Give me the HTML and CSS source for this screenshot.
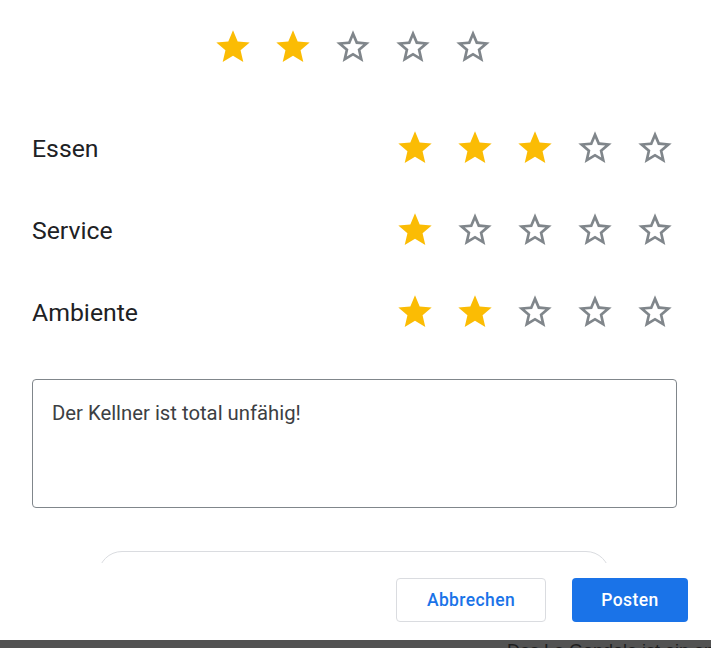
FILE: index.html
```html
<!DOCTYPE html>
<html lang="de">
<head>
<meta charset="utf-8">
<title>Bewertung</title>
<link rel="stylesheet" href="styles.css">
</head>
<body>
<svg width="0" height="0" class="defs" aria-hidden="true">
  <defs>
    <path id="full" d="M12 17.27L18.18 21l-1.64-7.03L22 9.24l-7.19-.61L12 2 9.19 8.63 2 9.24l5.46 4.73L5.820 21z"/>
    <path id="empty" d="M22 9.24l-7.19-.62L12 2 9.19 8.63 2 9.24l5.46 4.73L5.82 21 12 17.27 18.18 21l-1.63-7.03L22 9.24zM12 15.4l-3.76 2.27 1-4.28-3.32-2.88 4.38-.38L12 6.1l1.71 4.04 4.38.38-3.32 2.88 1 4.28L12 15.4z"/>
  </defs>
</svg>
<div class="dialog">
  <div class="scroll">
    <div class="overall">
      <svg class="star on" viewBox="0 0 24 24"><use href="#full"/></svg>
      <svg class="star on" viewBox="0 0 24 24"><use href="#full"/></svg>
      <svg class="star off" viewBox="0 0 24 24"><use href="#empty"/></svg>
      <svg class="star off" viewBox="0 0 24 24"><use href="#empty"/></svg>
      <svg class="star off" viewBox="0 0 24 24"><use href="#empty"/></svg>
    </div>
    <div class="criteria">
      <div class="row">
        <span class="label">Essen</span>
        <div class="stars">
          <svg class="star on" viewBox="0 0 24 24"><use href="#full"/></svg>
          <svg class="star on" viewBox="0 0 24 24"><use href="#full"/></svg>
          <svg class="star on" viewBox="0 0 24 24"><use href="#full"/></svg>
          <svg class="star off" viewBox="0 0 24 24"><use href="#empty"/></svg>
          <svg class="star off" viewBox="0 0 24 24"><use href="#empty"/></svg>
        </div>
      </div>
      <div class="row">
        <span class="label">Service</span>
        <div class="stars">
          <svg class="star on" viewBox="0 0 24 24"><use href="#full"/></svg>
          <svg class="star off" viewBox="0 0 24 24"><use href="#empty"/></svg>
          <svg class="star off" viewBox="0 0 24 24"><use href="#empty"/></svg>
          <svg class="star off" viewBox="0 0 24 24"><use href="#empty"/></svg>
          <svg class="star off" viewBox="0 0 24 24"><use href="#empty"/></svg>
        </div>
      </div>
      <div class="row">
        <span class="label">Ambiente</span>
        <div class="stars">
          <svg class="star on" viewBox="0 0 24 24"><use href="#full"/></svg>
          <svg class="star on" viewBox="0 0 24 24"><use href="#full"/></svg>
          <svg class="star off" viewBox="0 0 24 24"><use href="#empty"/></svg>
          <svg class="star off" viewBox="0 0 24 24"><use href="#empty"/></svg>
          <svg class="star off" viewBox="0 0 24 24"><use href="#empty"/></svg>
        </div>
      </div>
    </div>
    <textarea class="review">Der Kellner ist total unfähig!</textarea>
    <div class="card"></div>
  </div>
  <div class="footer">
    <button class="btn secondary">Abbrechen</button>
    <button class="btn primary">Posten</button>
  </div>
</div>
<div class="backdrop">
  <span class="behind">Das La Gondola ist ein angenehmes Restaurant</span>
</div>
</body>
</html>
```

FILE: styles.css
```css
html, body {
  margin: 0;
  padding: 0;
  background: #ffffff;
}
body {
  font-family: Roboto, "Noto Sans", Arial, sans-serif;
  width: 711px;
  height: 648px;
  overflow: hidden;
}
.defs {
  position: absolute;
  width: 0;
  height: 0;
}
.dialog {
  width: 711px;
  height: 640px;
  background: #ffffff;
  display: flex;
  flex-direction: column;
}
.scroll {
  height: 563px;
  overflow: hidden;
  padding: 27px 34px 0 32px;
  box-sizing: border-box;
}
.star {
  width: 40px;
  height: 40px;
  display: block;
  flex: none;
}
.star.on { fill: #fbbc04; }
.star.off { fill: #80868b; }
.overall {
  display: flex;
  justify-content: center;
  gap: 20px;
  padding-right: 3px;
}
.criteria {
  margin-top: 61px;
  display: flex;
  flex-direction: column;
  gap: 42px;
}
.row {
  display: flex;
  align-items: center;
  justify-content: space-between;
  padding-right: 2px;
}
.label {
  font-size: 24.8px;
  line-height: 32px;
  padding-top: 2px;
  color: #202124;
}
.stars {
  display: flex;
  gap: 20px;
}
.review {
  display: block;
  margin-top: 47px;
  width: 645px;
  height: 129px;
  box-sizing: border-box;
  border: 1px solid #80868b;
  border-radius: 4px;
  padding: 19px 19px;
  font-family: Roboto, "Noto Sans", Arial, sans-serif;
  font-size: 20.3px;
  line-height: 28px;
  color: #3c4043;
  resize: none;
  outline: none;
  background: #ffffff;
}
.card {
  margin: 43px 67px 0 66px;
  height: 80px;
  border: 1px solid #dadce0;
  border-radius: 24px;
}
.footer {
  height: 77px;
  box-sizing: border-box;
  padding: 15px 23px 0 0;
  display: flex;
  justify-content: flex-end;
  align-items: flex-start;
  gap: 26px;
  background: #ffffff;
}
.btn {
  height: 44px;
  border-radius: 4px;
  font-family: Roboto, "Noto Sans", Arial, sans-serif;
  font-size: 17.5px;
  font-weight: 500;
  letter-spacing: 0.4px;
  padding: 0;
  cursor: pointer;
}
.secondary {
  width: 150px;
  background: #ffffff;
  color: #1a73e8;
  border: 1px solid #dadce0;
}
.primary {
  width: 116px;
  background: #1a73e8;
  color: #ffffff;
  border: none;
}
.backdrop {
  height: 8px;
  background: #525252;
  overflow: hidden;
  position: relative;
}
.behind {
  position: absolute;
  left: 507px;
  top: 1px;
  font-family: "Liberation Sans", Arial, sans-serif;
  font-size: 18px;
  line-height: 20px;
  color: #1e1e1e;
  white-space: nowrap;
}
```
